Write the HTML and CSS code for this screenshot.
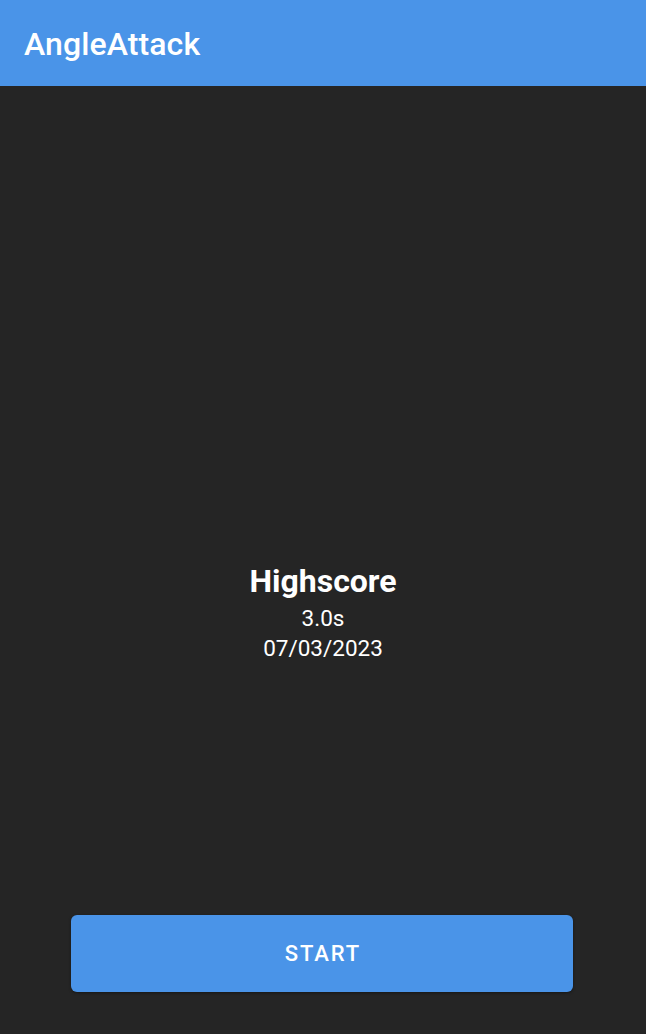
FILE: index.html
```html
<!DOCTYPE html>
<html>
<head>
<meta charset="utf-8">
<link rel="stylesheet" href="styles.css">
</head>
<body>
<div class="app">
  <header class="appbar"><h1 class="title">AngleAttack</h1></header>
  <main class="content">
    <div class="score">
      <div class="score-title">Highscore</div>
      <div class="score-line">3.0s</div>
      <div class="score-line">07/03/2023</div>
    </div>
  </main>
  <footer class="actions">
    <button class="start">START</button>
  </footer>
</div>
</body>
</html>
```

FILE: styles.css
```css
html, body {
  margin: 0;
  padding: 0;
  height: 100%;
}
body {
  background: #252525;
  font-family: Roboto, "Noto Sans", sans-serif;
  color: #ffffff;
}
.app {
  display: flex;
  flex-direction: column;
  height: 1034px;
}
.appbar {
  height: 86px;
  background: #4a94e8;
  display: flex;
  align-items: center;
  padding: 0 24px;
  flex: none;
}
.title {
  margin: 0;
  font-size: 32px;
  font-weight: 500;
  letter-spacing: 0.1px;
  color: #ffffff;
  padding-top: 2px;
}
.content {
  flex: 1;
  display: flex;
  align-items: center;
  justify-content: center;
  padding-top: 224px;
}
.score {
  display: flex;
  flex-direction: column;
  align-items: center;
}
.score-title {
  font-size: 32px;
  font-weight: 700;
  line-height: 38px;
  margin-bottom: 3px;
}
.score-line {
  font-size: 22.5px;
  line-height: 30px;
}
.actions {
  flex: none;
  display: flex;
  justify-content: center;
  padding: 0 2px 42px 0;
}
.start {
  width: 502px;
  height: 77px;
  border: none;
  border-radius: 6px;
  background: #4a94e8;
  color: #ffffff;
  font-family: Roboto, "Noto Sans", sans-serif;
  font-size: 22px;
  font-weight: 500;
  letter-spacing: 1.9px;
  padding: 0 0 0 2px;
  box-shadow: 0 1px 3px rgba(0,0,0,0.4);
}
```
